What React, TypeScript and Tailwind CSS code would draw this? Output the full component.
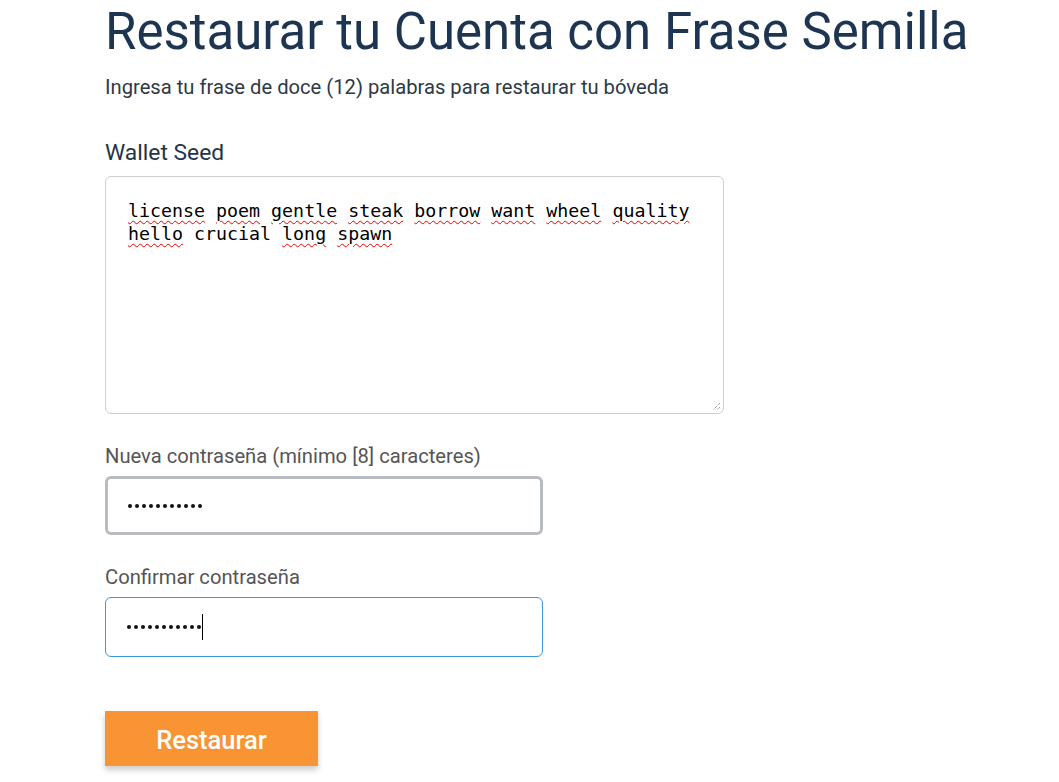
import React from "react";

const words: [string, boolean][] = [
  ["license", true], ["poem", true], ["gentle", true], ["steak", true], ["borrow", true], ["want", true], ["wheel", true], ["quality", true],
];
const words2: [string, boolean][] = [
  ["hello", true], ["crucial", false], ["long", true], ["spawn", true],
];

function Line({ items }: { items: [string, boolean][] }) {
  return (
    <div>
      {items.map(([w, u], i) => (
        <React.Fragment key={i}>
          <span className={u ? "underline decoration-wavy decoration-[#e00] decoration-1 underline-offset-[3px]" : ""}>{w}</span>
          {i < items.length - 1 ? " " : ""}
        </React.Fragment>
      ))}
    </div>
  );
}

function Dots() {
  return (
    <div className="flex gap-[3px]">
      {Array.from({ length: 11 }).map((_, i) => (
        <span key={i} className="block w-[4px] h-[4px] rounded-full bg-[#111]"></span>
      ))}
    </div>
  );
}

export default function App() {
  return (
    <div className="min-h-[782px] bg-white pl-[105px] pt-[2px]" style={{ fontFamily: "Roboto, 'Liberation Sans', sans-serif" }}>
      <h1 className="text-[51px] leading-[60px] text-[#1d3550] font-normal">Restaurar tu Cuenta con Frase Semilla</h1>
      <p className="mt-[13px] text-[20.2px] leading-[24px] text-[#2d3a45]">Ingresa tu frase de doce (12) palabras para restaurar tu bóveda</p>

      <label className="block mt-[40px] text-[22.8px] leading-[28px] text-[#243447]">Wallet Seed</label>
      <div className="relative mt-[9px] w-[619px] h-[238px] border border-[#cfcfcf] rounded-[6px] px-[22px] pt-[22px] text-[18.3px] leading-[23px] text-black" style={{ fontFamily: "'DejaVu Sans Mono', 'Liberation Mono', monospace" }}>
        <Line items={words} />
        <Line items={words2} />
        <svg className="absolute right-[2px] bottom-[2px]" width="10" height="10" viewBox="0 0 10 10">
          <path d="M9 2 L2 9 M9 6 L6 9" stroke="#777" strokeWidth="1" strokeDasharray="1 1" />
        </svg>
      </div>

      <label className="block mt-[29px] text-[20.2px] leading-[26px] text-[#555]">Nueva contraseña (mínimo [8] caracteres)</label>
      <div className="mt-[7px] w-[438px] h-[59px] border-[3px] border-[#b8bcc0] rounded-[6px] flex items-center pl-[20px]">
        <Dots />
      </div>

      <label className="block mt-[29px] text-[20.2px] leading-[26px] text-[#555]">Confirmar contraseña</label>
      <div className="mt-[7px] w-[438px] h-[60px] border border-[#3a9ad9] rounded-[6px] flex items-center pl-[21px]">
        <Dots />
        <span className="w-[1px] h-[26px] bg-black ml-[1px]"></span>
      </div>

      <button className="mt-[54px] w-[213px] h-[55px] pt-[4px] bg-[#f89434] text-white text-[25.5px] font-medium shadow-[0_4px_6px_rgba(0,0,0,0.2)]">Restaurar</button>
    </div>
  );
}
